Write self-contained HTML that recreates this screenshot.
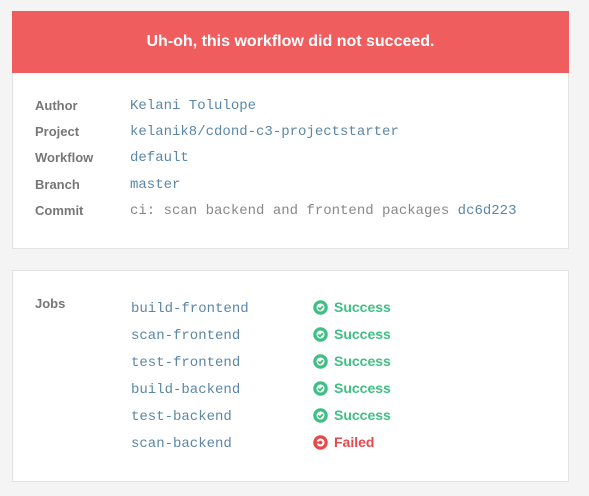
<!DOCTYPE html>
<html><head><style>
body{margin:0;background:#f4f4f4;width:589px;height:496px;position:relative;font-family:"Liberation Sans",sans-serif}
.card{position:absolute;left:12px;width:557px;background:#fff;border:1px solid #e3e3e3;box-sizing:border-box}
.hd{position:absolute;left:12px;top:11px;width:557px;height:62px;background:#ef5d5e;color:#fff;font-weight:bold;font-size:16px;text-align:center;line-height:62px}
.l{position:absolute;left:35px;color:#777;font-weight:bold;font-size:13px}
.v{position:absolute;color:#5a87a8;font-family:"Liberation Mono",monospace;font-size:14px}
.s{position:absolute;left:313px;font-weight:bold;font-size:14px;display:flex;align-items:center;gap:6px}
.g{color:#3fbf84}.r{color:#e4494c}
</style></head><body>
<div class="card" style="top:11px;height:238px"></div>
<div class="hd">Uh-oh, this workflow did not succeed.</div>
<div class="l" style="top:98px">Author</div><div class="v" style="left:130px;top:98px">Kelani Tolulope</div>
<div class="l" style="top:124px">Project</div><div class="v" style="left:130px;top:124px">kelanik8/cdond-c3-projectstarter</div>
<div class="l" style="top:150px">Workflow</div><div class="v" style="left:130px;top:150px">default</div>
<div class="l" style="top:177px">Branch</div><div class="v" style="left:130px;top:177px">master</div>
<div class="l" style="top:203px">Commit</div><div class="v" style="left:130px;top:203px"><span style="color:#888">ci: scan backend and frontend packages</span> dc6d223</div>
<div class="card" style="top:270px;height:212px"></div>
<div class="l" style="top:296px">Jobs</div>
<div class="v" style="left:131px;top:301px">build-frontend</div>
<div class="v" style="left:131px;top:328px">scan-frontend</div>
<div class="v" style="left:131px;top:355px">test-frontend</div>
<div class="v" style="left:131px;top:382px">build-backend</div>
<div class="v" style="left:131px;top:409px">test-backend</div>
<div class="v" style="left:131px;top:436px">scan-backend</div>
<div class="s g" style="top:299px"><svg width="15" height="15" viewBox="0 0 16 16"><circle cx="8" cy="8" r="6" fill="none" stroke="#3fbf84" stroke-width="3.5"/><path d="M5.5 8l2 2 3-3.5" fill="none" stroke="#3fbf84" stroke-width="2"/></svg>Success</div>
<div class="s g" style="top:326px"><svg width="15" height="15" viewBox="0 0 16 16"><circle cx="8" cy="8" r="6" fill="none" stroke="#3fbf84" stroke-width="3.5"/><path d="M5.5 8l2 2 3-3.5" fill="none" stroke="#3fbf84" stroke-width="2"/></svg>Success</div>
<div class="s g" style="top:353px"><svg width="15" height="15" viewBox="0 0 16 16"><circle cx="8" cy="8" r="6" fill="none" stroke="#3fbf84" stroke-width="3.5"/><path d="M5.5 8l2 2 3-3.5" fill="none" stroke="#3fbf84" stroke-width="2"/></svg>Success</div>
<div class="s g" style="top:380px"><svg width="15" height="15" viewBox="0 0 16 16"><circle cx="8" cy="8" r="6" fill="none" stroke="#3fbf84" stroke-width="3.5"/><path d="M5.5 8l2 2 3-3.5" fill="none" stroke="#3fbf84" stroke-width="2"/></svg>Success</div>
<div class="s g" style="top:407px"><svg width="15" height="15" viewBox="0 0 16 16"><circle cx="8" cy="8" r="6" fill="none" stroke="#3fbf84" stroke-width="3.5"/><path d="M5.5 8l2 2 3-3.5" fill="none" stroke="#3fbf84" stroke-width="2"/></svg>Success</div>
<div class="s r" style="top:434px"><svg width="15" height="15" viewBox="0 0 16 16"><circle cx="8" cy="8" r="6" fill="none" stroke="#e4494c" stroke-width="3.5"/><circle cx="8" cy="8" r="2" fill="#e4494c"/><path d="M2 8h4" stroke="#e4494c" stroke-width="2"/></svg>Failed</div>
</body></html>
